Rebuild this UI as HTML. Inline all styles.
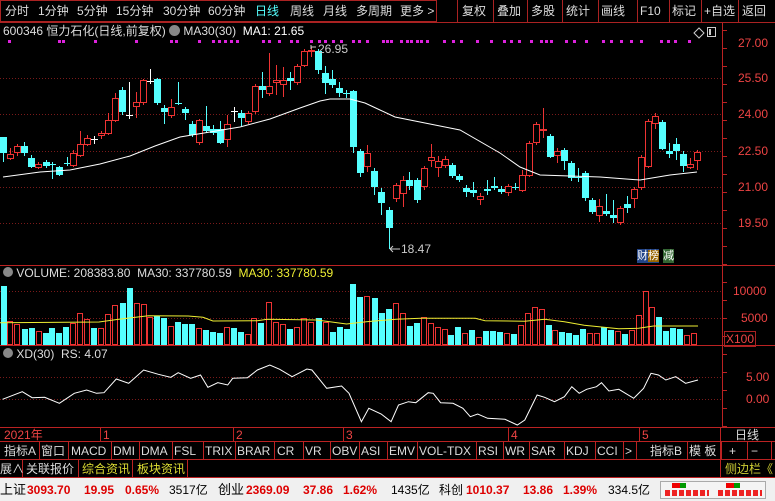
<!DOCTYPE html>
<html><head><meta charset="utf-8"><style>
*{margin:0;padding:0;box-sizing:border-box}
body{width:775px;height:501px;background:#000;overflow:hidden;font-family:"Liberation Sans","Noto Sans CJK SC",sans-serif;font-size:12px;color:#ddd;position:relative}
.a{position:absolute;white-space:nowrap;line-height:14px}
.k{position:absolute;white-space:nowrap;line-height:14px;top:483px;color:#000;font-size:12px}
.k b{color:#d00}
svg{position:absolute;left:0;top:0}
</style></head><body>
<svg id="s" width="775" height="501" xmlns="http://www.w3.org/2000/svg"></svg>
<div class="a" style="left:5px;top:4px">分时</div>
<div class="a" style="left:38px;top:4px">1分钟</div>
<div class="a" style="left:77px;top:4px">5分钟</div>
<div class="a" style="left:116px;top:4px">15分钟</div>
<div class="a" style="left:163px;top:4px">30分钟</div>
<div class="a" style="left:208px;top:4px">60分钟</div>
<div class="a" style="left:255px;top:4px;color:#5ff">日线</div>
<div class="a" style="left:290px;top:4px">周线</div>
<div class="a" style="left:323px;top:4px">月线</div>
<div class="a" style="left:356px;top:4px">多周期</div>
<div class="a" style="left:400px;top:4px">更多 &gt;</div>
<div class="a" style="left:462px;top:4px">复权</div>
<div class="a" style="left:497px;top:4px">叠加</div>
<div class="a" style="left:531px;top:4px">多股</div>
<div class="a" style="left:566px;top:4px">统计</div>
<div class="a" style="left:601px;top:4px">画线</div>
<div class="a" style="left:640px;top:4px">F10</div>
<div class="a" style="left:672px;top:4px">标记</div>
<div class="a" style="left:704px;top:4px">+自选</div>
<div class="a" style="left:742px;top:4px">返回</div>
<div class="a" style="left:3px;top:24px">600346 恒力石化(日线,前复权) <span style="display:inline-block;width:11px;height:11px;border-radius:6px;background:#888;vertical-align:-1px"></span> MA30(30)&nbsp; <span style="color:#fff">MA1: 21.65</span></div>
<div class="a" style="left:318px;top:42px;color:#ccc">26.95</div>
<div class="a" style="left:401px;top:242px;color:#ccc">18.47</div>
<div class="a" style="left:637px;top:249px;color:#fff;background:#248;font-size:11px">财<span style="background:#960">榜</span></div>
<div class="a" style="left:663px;top:249px;color:#fff;background:#363;font-size:11px">减</div>
<div class="a" style="left:738px;top:36px;color:#e44">27.00</div>
<div class="a" style="left:738px;top:71px;color:#e44">25.50</div>
<div class="a" style="left:738px;top:107px;color:#e44">24.00</div>
<div class="a" style="left:738px;top:144px;color:#e44">22.50</div>
<div class="a" style="left:738px;top:180px;color:#e44">21.00</div>
<div class="a" style="left:738px;top:216px;color:#e44">19.50</div>
<div class="a" style="left:3px;top:266px"><span style="display:inline-block;width:10px;height:10px;border-radius:5px;background:#888"></span> VOLUME: 208383.80&nbsp; MA30: 337780.59&nbsp; <span style="color:#ee3">MA30: 337780.59</span></div>
<div class="a" style="left:733px;top:284px;color:#e44">10000</div>
<div class="a" style="left:741px;top:311px;color:#e44">5000</div>
<div class="a" style="left:724px;top:331px;color:#e44;border:1px solid #a22;padding:0 1px">X100</div>
<div class="a" style="left:3px;top:347px"><span style="display:inline-block;width:10px;height:10px;border-radius:5px;background:#888"></span> XD(30)&nbsp; RS: 4.07</div>
<div class="a" style="left:746px;top:370px;color:#e44">5.00</div>
<div class="a" style="left:746px;top:392px;color:#e44">0.00</div>
<div class="a" style="left:4px;top:428px;color:#e44">2021年</div>
<div class="a" style="left:103px;top:428px;color:#e44">1</div>
<div class="a" style="left:236px;top:428px;color:#e44">2</div>
<div class="a" style="left:346px;top:428px;color:#e44">3</div>
<div class="a" style="left:511px;top:428px;color:#e44">4</div>
<div class="a" style="left:642px;top:428px;color:#e44">5</div>
<div class="a" style="left:735px;top:428px;color:#ddd">日线</div>
<div id="tabs"></div>
<div class="a" style="left:0px;top:462px">展∧</div>
<div class="a" style="left:26px;top:462px">关联报价</div>
<div class="a" style="left:82px;top:462px;color:#dd3">综合资讯</div>
<div class="a" style="left:137px;top:462px;color:#dd3">板块资讯</div>
<div class="a" style="left:725px;top:462px;color:#cc3">侧边栏《</div>
<div style="position:absolute;left:0;top:478px;width:775px;height:23px;background:#f0f0f0"></div>
<div class="k" style="left:0;font-size:13px">上证</div>
<div class="k" style="left:27px"><b>3093.70</b></div>
<div class="k" style="left:84px"><b>19.95</b></div>
<div class="k" style="left:125px"><b>0.65%</b></div>
<div class="k" style="left:169px">3517亿</div>
<div class="k" style="left:218px;font-size:13px">创业</div>
<div class="k" style="left:246px"><b>2369.09</b></div>
<div class="k" style="left:303px"><b>37.86</b></div>
<div class="k" style="left:343px"><b>1.62%</b></div>
<div class="k" style="left:391px">1435亿</div>
<div class="k" style="left:439px">科创</div>
<div class="k" style="left:466px"><b>1010.37</b></div>
<div class="k" style="left:523px"><b>13.86</b></div>
<div class="k" style="left:563px"><b>1.39%</b></div>
<div class="k" style="left:608px">334.5亿</div>
<div style="position:absolute;left:660px;top:481px;width:106px;height:18px;border:1px solid #aaa;background:#f4f4f4"></div>
<div style="position:absolute;left:672px;top:483px;width:8px;height:5px;background:#e00"></div><div style="position:absolute;left:680px;top:483px;width:6px;height:5px;background:#090"></div>
<div style="position:absolute;left:726px;top:483px;width:8px;height:5px;background:#e00"></div><div style="position:absolute;left:734px;top:483px;width:6px;height:5px;background:#090"></div>
<div style="position:absolute;left:665px;top:490px;width:44px;height:6px;background:repeating-linear-gradient(90deg,#e22 0 5px,transparent 5px 7px)"></div>
<div style="position:absolute;left:718px;top:490px;width:44px;height:6px;background:repeating-linear-gradient(90deg,#e22 0 5px,transparent 5px 7px)"></div>
<script>
var s=document.getElementById('s'),h='';
function L(x1,y1,x2,y2,c,w,d){h+='<line x1="'+x1+'" y1="'+y1+'" x2="'+x2+'" y2="'+y2+'" stroke="'+c+'" stroke-width="'+(w||1)+'"'+(d?' stroke-dasharray="'+d+'"':'')+'/>';}
function R(x,y,w,hh,f,st){h+='<rect x="'+x+'" y="'+y+'" width="'+w+'" height="'+hh+'" fill="'+f+'"'+(st?' stroke="'+st+'"':'')+'/>';}
R(0.5,0.5,436,21,'none','#a22');L(0,22.5,775,22.5,'#a22');
[457,493,527,562,598,637,669,701,738].forEach(function(x){L(x+.5,0,x+.5,22,'#a22')});
[78,114,151,187,223].forEach(function(y){L(0,y+.5,722,y+.5,'#7a1a1a',1,'1 2')});
[291,318].forEach(function(y){L(0,y+.5,722,y+.5,'#7a1a1a',1,'1 2')});
[377,399].forEach(function(y){L(0,y+.5,722,y+.5,'#7a1a1a',1,'1 2')});
L(0,265.5,775,265.5,'#b22');L(0,345.5,775,345.5,'#b22');L(0,427.5,775,427.5,'#b22');L(0,441.5,775,441.5,'#b22');L(0,459.5,775,459.5,'#b22');L(0,477.5,775,477.5,'#b22');
L(722.5,23,722.5,428,'#b22');
for(var y=30;y<428;y+=18)L(722,y+.5,727,y+.5,'#b22');
[103,236,346,511,642].forEach(function(x){L(x-2.5,428,x-2.5,441,'#b22')});
L(720.5,428,720.5,478,'#b22');
var dots=[8,58,62,94,135,170,175,198,212,218,224,230,236,262,268,278,290,296,310,318,324,332,340,352,358,366,382,386,390,400,406,410,416,420,426,443,452,460,476,490,503,510,518,530,540,545,550,565,573,585,602,610,620,630,640,660,667,674,688];
dots.forEach(function(x){R(x,40,3,3,'#d2d')});
h+='<path d="M694 33 l5 -5 l5 5 l-5 5z" fill="none" stroke="#ccc"/>';R(707.5,27.5,8,9,'none','#ccc');R(709,29,2,6,'#ccc');
var C=[[3,137,153,137,162,'c'],[10,154,159,148,160,'r'],[17,146,153,144,156,'r'],[24,146,153,142,156,'c'],[31,158,167,155,168,'c'],[38,164,168,162,169,'r'],[46,162,166,160,168,'c'],[52,164,165,162,179,'c'],[59,167,175,166,176,'c'],[67,163,164,157,166,'c'],[73,153,166,150,167,'r'],[80,144,156,131,157,'r'],[87,138,145,135,146,'r'],[94,139,140,136,144,'w'],[101,133,136,131,139,'r'],[108,120,134,113,135,'r'],[115,98,121,93,122,'r'],[122,90,112,87,115,'c'],[129,115,116,82,119,'w'],[136,102,107,92,118,'r'],[143,80,103,79,105,'r'],[150,81,82,69,84,'w'],[157,79,103,78,105,'c'],[164,108,112,105,124,'c'],[171,107,116,99,118,'r'],[178,103,104,82,105,'c'],[185,109,113,107,120,'c'],[192,124,135,121,137,'c'],[199,120,143,119,145,'r'],[206,126,131,106,133,'c'],[213,129,133,125,135,'c'],[220,129,143,121,144,'c'],[227,124,140,115,147,'r'],[234,111,112,107,122,'w'],[241,113,118,110,126,'c'],[248,113,122,111,124,'r'],[255,86,112,84,114,'r'],[262,86,90,72,98,'c'],[269,86,94,53,96,'r'],[276,80,83,65,95,'r'],[283,80,85,67,97,'r'],[290,78,81,72,90,'c'],[297,66,83,64,85,'r'],[304,51,66,49,67,'r'],[311,50,52,47,57,'r'],[318,51,70,49,74,'c'],[325,73,83,66,94,'c'],[332,79,85,70,88,'c'],[339,88,93,82,97,'c'],[346,93,94,90,98,'c'],[353,91,147,90,153,'c'],[360,151,173,149,177,'c'],[367,153,167,145,172,'r'],[374,171,187,168,195,'c'],[381,192,203,188,215,'c'],[389,210,228,207,249,'c'],[396,185,199,183,202,'r'],[403,180,194,176,207,'r'],[409,180,186,172,190,'c'],[417,180,200,178,203,'c'],[424,168,187,166,190,'r'],[431,157,161,144,167,'r'],[438,161,168,156,177,'r'],[445,159,166,156,168,'r'],[452,165,176,163,178,'c'],[459,176,180,174,182,'c'],[466,188,192,185,197,'c'],[473,190,193,182,197,'c'],[480,196,200,193,205,'r'],[487,189,191,180,195,'c'],[494,186,188,177,190,'c'],[501,189,192,186,194,'c'],[508,186,193,184,196,'r'],[515,187,188,183,190,'c'],[522,175,191,170,192,'r'],[529,143,176,141,177,'r'],[536,124,143,122,145,'r'],[543,129,130,108,138,'r'],[550,136,157,134,158,'c'],[557,151,156,148,163,'r'],[564,150,161,148,170,'c'],[571,163,178,161,181,'c'],[578,177,178,168,182,'c'],[585,173,198,171,201,'c'],[592,200,212,198,214,'c'],[599,206,216,199,222,'r'],[606,211,214,194,216,'c'],[613,215,218,200,223,'c'],[620,208,223,206,225,'r'],[627,204,208,196,213,'c'],[634,189,199,187,208,'r'],[641,157,188,155,190,'r'],[648,121,167,119,168,'r'],[655,116,124,113,129,'r'],[662,122,149,120,150,'c'],[669,151,154,143,158,'c'],[676,144,151,138,160,'c'],[683,154,166,151,172,'c'],[690,164,168,158,169,'r'],[697,152,161,150,170,'r']];
C.forEach(function(c){var x=c[0],col=c[5]=='r'?'#e33':(c[5]=='c'?'#5ff':'#fff');
L(x+.5,c[3],x+.5,c[4],col);
if(c[5]=='r')R(x-2.5,c[1]+.5,6,Math.max(1,c[2]-c[1]-1),'#000',col);else R(x-3,c[1],7,Math.max(1,c[2]-c[1]),col);});
L(311,47,316,47,'#ccc');L(311,45,311,49,'#ccc');
h+='<path d="M390 249 H400 M390 249 l3 -3 M390 249 l3 3" stroke="#ccc" fill="none"/>';
var ma=[[3,177],[40,172],[70,170],[100,164],[130,156],[155,146],[180,137],[210,132],[240,127],[270,119],[300,108],[320,101],[330,99],[350,99],[365,103],[380,110],[395,117],[430,124],[460,130],[500,153],[520,167],[540,175],[600,177],[640,180],[670,175],[697,172]];
h+='<polyline fill="none" stroke="#fff" points="'+ma.join(' ')+'"/>';
var V=[[8,78,'c'],[20,182,'r'],[35,192,'r'],[50,207,'c'],[65,205,'c'],[78,212,'r'],[92,218,'c'],[106,205,'c'],[120,218,'c'],[134,200,'c'],[148,188,'r'],[162,160,'r'],[176,178,'r'],[190,205,'c'],[204,205,'r'],[218,163,'r'],[233,136,'r'],[248,128,'c'],[262,85,'c'],[276,130,'r'],[290,133,'r'],[304,172,'r'],[318,168,'c'],[332,175,'c'],[346,198,'r'],[360,185,'c'],[374,192,'c'],[388,192,'c'],[402,205,'r'],[416,210,'c'],[430,215,'c'],[444,220,'c'],[458,202,'r'],[472,205,'c'],[486,215,'c'],[500,222,'r'],[514,175,'r'],[528,188,'c'],[544,127,'r'],[558,185,'r'],[572,192,'r'],[586,208,'c'],[600,202,'r'],[614,175,'r'],[628,185,'r'],[644,175,'c'],[658,185,'r'],[672,215,'c'],[686,202,'c'],[700,207,'c'],[714,72,'c'],[728,112,'c'],[742,108,'r'],[758,115,'c'],[772,158,'c'],[786,148,'c'],[800,130,'r'],[814,158,'r'],[828,198,'c'],[842,188,'c'],[856,170,'r'],[870,188,'r'],[884,200,'r'],[898,208,'r'],[912,225,'c'],[926,202,'c'],[940,218,'r'],[954,210,'c'],[968,232,'r'],[982,213,'c'],[996,213,'c'],[1010,215,'c'],[1024,220,'r'],[1038,222,'c'],[1052,196,'r'],[1066,158,'r'],[1080,142,'r'],[1094,148,'r'],[1108,195,'c'],[1122,210,'r'],[1136,216,'c'],[1150,218,'c'],[1164,225,'c'],[1178,208,'c'],[1192,218,'r'],[1206,218,'r'],[1220,202,'c'],[1234,210,'c'],[1248,212,'r'],[1262,222,'c'],[1276,210,'r'],[1290,165,'r'],[1304,92,'r'],[1318,142,'r'],[1332,172,'c'],[1346,212,'c'],[1360,205,'c'],[1374,206,'c'],[1388,225,'r'],[1402,220,'r']];
V.forEach(function(v){var x=Math.round(v[0]/2.02)-3,y=Math.round(260+v[1]/3),hh=345-y;
if(v[2]=='r')R(x+.5,y+.5,5,hh-1,'#000','#e33');else R(x,y,6,hh,'#5ff');});
var vm=[[0,188],[200,186],[240,178],[300,167],[380,168],[410,172],[430,183],[520,182],[540,178],[640,180],[700,192],[740,185],[800,178],[850,175],[960,175],[980,182],[1060,184],[1100,178],[1140,185],[1180,196],[1250,206],[1290,205],[1320,198],[1410,198]];
h+='<polyline fill="none" stroke="#ee3" points="'+vm.map(function(p){return (p[0]/2.02).toFixed(1)+','+(260+p[1]/3).toFixed(1)}).join(' ')+'"/>';
var xd=[[5,418],[45,395],[65,413],[90,412],[120,430],[150,400],[175,390],[195,400],[210,398],[235,357],[260,370],[290,330],[320,343],[345,352],[360,338],[385,355],[405,345],[420,382],[440,368],[460,375],[470,355],[500,353],[520,330],[545,315],[565,328],[590,350],[620,327],[630,330],[660,385],[690,378],[705,400],[730,485],[745,445],[770,462],[790,485],[805,435],[825,425],[840,428],[865,398],[875,400],[890,428],[915,430],[935,445],[950,470],[965,462],[985,475],[1020,478],[1045,495],[1060,480],[1085,405],[1100,412],[1120,425],[1140,410],[1155,380],[1170,400],[1185,388],[1205,380],[1215,368],[1230,393],[1250,388],[1280,415],[1300,385],[1315,340],[1330,345],[1345,360],[1365,350],[1385,370],[1410,360]];
h+='<polyline fill="none" stroke="#fff" points="'+xd.map(function(p){return (p[0]/2.02).toFixed(1)+','+(260+p[1]/3).toFixed(1)}).join(' ')+'"/>';
var T=[['指标A',3,38],['窗口',40,67],['MACD',70,110],['DMI',112,138],['DMA',140,171],['FSL',173,202],['TRIX',204,234],['BRAR',236,273],['CR',276,302],['VR',304,329],['OBV',331,358],['ASI',360,386],['EMV',388,416],['VOL-TDX',418,475],['RSI',477,502],['WR',504,528],['SAR',530,563],['KDJ',565,594],['CCI',596,622],['>',624,635],['指标B',649,686],['模 板',688,720],['+',728,746],['−',750,770]],t='';
T.forEach(function(a){t+='<div class="a" style="left:'+(a[1]+1)+'px;top:444px">'+a[0]+'</div>';L(a[2]+1.5,442,a[2]+1.5,459,'#b22');});
L(22.5,460,22.5,477,'#b22');L(78.5,460,78.5,477,'#b22');L(132.5,460,132.5,477,'#b22');L(187.5,460,187.5,477,'#b22');
document.getElementById('tabs').innerHTML=t;
s.innerHTML=h;
</script>
</body></html>
